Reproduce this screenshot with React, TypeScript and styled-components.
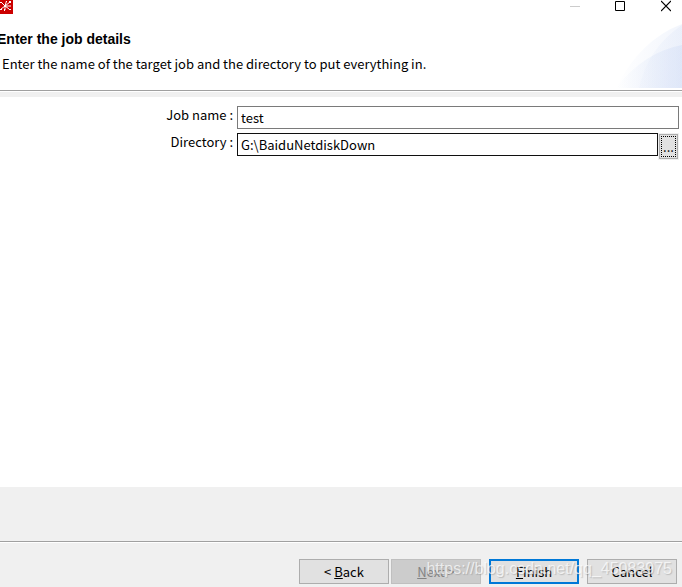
import React, { useState } from "react";
import styled, { createGlobalStyle } from "styled-components";

const GlobalStyle = createGlobalStyle`
  *, *::before, *::after { box-sizing: border-box; }
  body {
    margin: 0;
    background: #fff;
    color: #000;
    font: 13px/18px "Noto Sans CJK SC", "Open Sans", sans-serif;
  }
`;

const Dialog = styled.div`
  display: flex;
  flex-direction: column;
  min-height: 100vh;
  overflow: hidden;
`;

const TitleBar = styled.div`
  display: flex;
  justify-content: space-between;
  align-items: flex-start;
  height: 24px;
`;

const WindowControls = styled.div`
  display: flex;
  gap: 31px;
  padding-right: 11px;
`;

const WindowButton = styled.button`
  display: flex;
  padding: 0;
  border: 0;
  background: none;
`;

const Header = styled.header`
  display: flex;
  justify-content: space-between;
  height: 67px;
  border-bottom: 1px solid #a0a0a0;
`;

const Heading = styled.h1`
  margin: 5px 0 0 -3px;
  font: bold 14px/20px "Liberation Sans", sans-serif;
`;

const Description = styled.p`
  margin: 6px 0 0 2px;
  white-space: nowrap;
`;

const Separator = styled.div`
  height: 6px;
  border-top: 1px solid #fff;
  background: #f0f0f0;
`;

const Form = styled.form`
  flex: 1;
  display: grid;
  grid-template-columns: 233px 1fr;
  grid-auto-rows: 23px;
  align-content: start;
  gap: 4px;
  padding: 9px 3px 0 0;
`;

const Label = styled.label`
  line-height: 18px;
  text-align: right;
`;

const Field = styled.div`
  display: flex;
  align-items: flex-start;
`;

const TextInput = styled.input<{ $dark?: boolean }>`
  flex: 1;
  min-width: 0;
  height: 23px;
  padding: 0 3px;
  border: 1px solid ${(p) => (p.$dark ? "#101010" : "#7a7a7a")};
  border-radius: 0;
  outline: 0;
  background: #fff;
  color: #000;
  font: inherit;
`;

const BrowseButton = styled.button`
  width: 21px;
  height: 27px;
  padding: 0;
  border: 1px solid #f0f0f0;
  background: #f0f0f0;
  font: inherit;
`;

const BrowseFace = styled.span`
  display: block;
  height: 25px;
  padding: 1px;
  border: 1px solid #adadad;
  background: #e1e1e1;
`;

const FocusRing = styled.span`
  display: block;
  height: 21px;
  border: 1px dotted #000;
  line-height: 20px;
`;

const StatusArea = styled.div`
  height: 55px;
  border-bottom: 1px solid #a0a0a0;
  background: #f0f0f0;
`;

const Footer = styled.footer`
  position: relative;
  display: flex;
  justify-content: flex-end;
  gap: 8px;
  height: 45px;
  padding: 16px 5px 0 0;
  border-top: 1px solid #fff;
  background: #f0f0f0;
`;

const StepButtons = styled.div`
  display: flex;
  gap: 2px;
`;

const PushButton = styled.button<{ $primary?: boolean }>`
  width: 90px;
  height: 25px;
  padding: 0;
  border: ${(p) => (p.$primary ? "2px solid #0078d7" : "1px solid #adadad")};
  background: #e1e1e1;
  color: #000;
  font: inherit;

  &:disabled {
    border-color: #bfbfbf;
    background: #ccc;
    color: #838383;
  }
`;

const Watermark = styled.span`
  position: absolute;
  right: 10px;
  top: 16px;
  color: rgba(255, 255, 255, 0.7);
  font: 16px/20px "Liberation Sans", sans-serif;
  text-shadow: 1px 1px 1px rgba(120, 120, 120, 0.35);
  pointer-events: none;
`;

const AppIcon = () => (
  <svg width="13" height="14" viewBox="0 0 13 14" aria-hidden="true">
    <path fill="#c00" d="M0 0h13v14H0z" />
    <path stroke="#fff" fill="none" d="M5 6L1 2M5 6L6.500 1M5 6L10 2M5 6H11M5 6L9 9M5 6L5 10M5 6L1 9" />
    <path fill="#fff" d="M0 2h1v1H0zM6 1h1v1H6zM9 1h2v2H9zM9 9h2v1H9zM4 9h1v2H4zM0 9h2v1H0zM4 5h2v2H4z" />
  </svg>
);

const HeaderArt = () => (
  <svg width="66" height="64" viewBox="0 0 66 64" aria-hidden="true">
    <defs>
      <linearGradient id="art" gradientUnits="userSpaceOnUse" x1="0" x2="66" y1="0" y2="0">
        <stop offset="0" stopColor="#d0dcf5" stopOpacity="0" />
        <stop offset="1" stopColor="#d0dcf5" stopOpacity="0.55" />
      </linearGradient>
    </defs>
    <path fill="url(#art)" fillOpacity="0.5" d="M0 64Q24 16 66 0V64z" />
    <path fill="url(#art)" fillOpacity="0.4" d="M23 64Q32 24 66 1V64z" />
    <path fill="url(#art)" fillOpacity="0.8" d="M0 64Q28 28 66 21V64z" />
  </svg>
);

export default function App() {
  const [jobName, setJobName] = useState("test");
  const [directory, setDirectory] = useState("G:\\BaiduNetdiskDown");
  return (
    <Dialog>
      <GlobalStyle />
      <TitleBar>
        <AppIcon />
        <WindowControls>
          <WindowButton aria-label="Minimize">
            <svg width="14" height="12"><path stroke="#ccc" d="M0 6.5h10" /></svg>
          </WindowButton>
          <WindowButton aria-label="Maximize">
            <svg width="15" height="12"><path fill="none" stroke="#000" d="M.5 1.5h9v9h-9z" /></svg>
          </WindowButton>
          <WindowButton aria-label="Close">
            <svg width="10" height="12"><path stroke="#000" strokeWidth="1.2" d="M0 1l10 10M10 1L0 11" /></svg>
          </WindowButton>
        </WindowControls>
      </TitleBar>
      <Header>
        <div>
          <Heading>Enter the job details</Heading>
          <Description>Enter the name of the target job and the directory to put everything in.</Description>
        </div>
        <HeaderArt />
      </Header>
      <Separator />
      <Form id="job" onSubmit={(e) => e.preventDefault()}>
        <Label htmlFor="job-name">Job name :</Label>
        <Field>
          <TextInput id="job-name" value={jobName} onChange={(e) => setJobName(e.target.value)} />
        </Field>
        <Label htmlFor="directory">Directory :</Label>
        <Field>
          <TextInput $dark id="directory" value={directory} onChange={(e) => setDirectory(e.target.value)} />
          <BrowseButton type="button" aria-label="Browse for directory">
            <BrowseFace><FocusRing>...</FocusRing></BrowseFace>
          </BrowseButton>
        </Field>
      </Form>
      <StatusArea />
      <Footer>
        <StepButtons>
          <PushButton type="button">&lt; <u>B</u>ack</PushButton>
          <PushButton type="button" disabled><u>N</u>ext &gt;</PushButton>
        </StepButtons>
        <PushButton $primary type="submit" form="job"><u>F</u>inish</PushButton>
        <PushButton type="button">Cancel</PushButton>
        <Watermark>https://blog.csdn.net/qq_45083975</Watermark>
      </Footer>
    </Dialog>
  );
}
